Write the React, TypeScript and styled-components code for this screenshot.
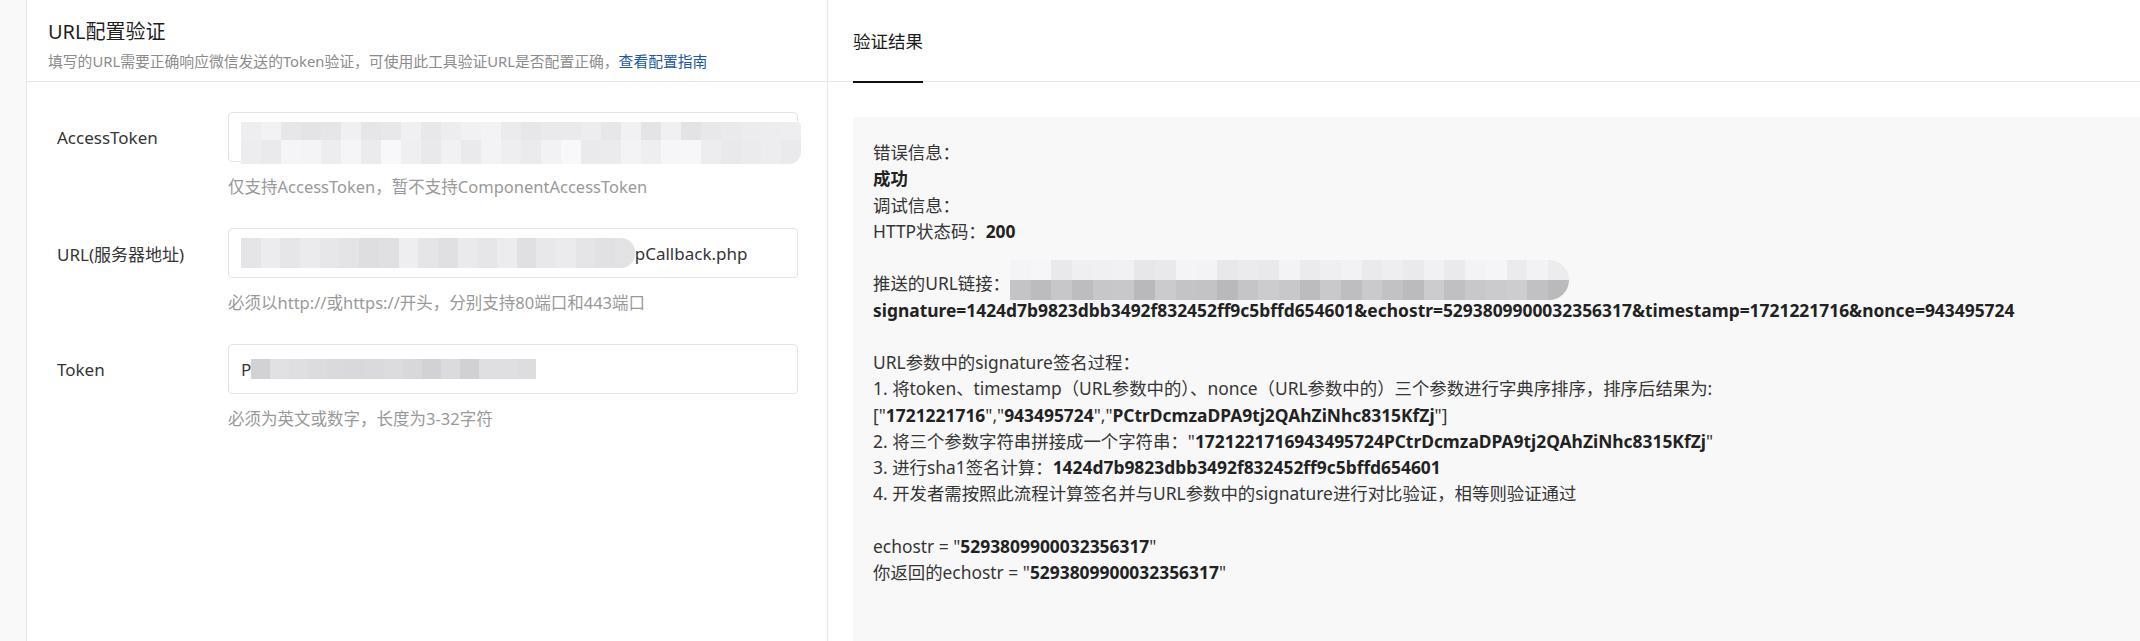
import React from 'react';
import styled, { createGlobalStyle } from 'styled-components';

const GlobalStyle = createGlobalStyle`
  html, body {
    margin: 0;
    padding: 0;
    background: #fff;
  }
  body {
    font-family: "Noto Sans", "Noto Sans CJK SC", sans-serif;
    color: #353535;
  }
`;

// blurred (pixelated) bits of the screenshot, a grid of grey cells
type MosaicRow = { h: number; lo: number; hi: number };

function shades(count: number, seed: number, lo: number, hi: number) {
  const out: string[] = [];
  let s = seed;
  for (let i = 0; i < count; i++) {
    s = (s * 9301 + 49297) % 233280;
    const v = Math.round(lo + (s / 233280) * (hi - lo));
    out.push(`rgb(${v},${v},${Math.min(255, v + 2)})`);
  }
  return out;
}

const MosaicGrid = styled.span<{ $cols: number; $cell: number; $radius: string; $shift: number }>`
  display: inline-grid;
  flex-shrink: 0;
  grid-template-columns: repeat(${(p) => p.$cols}, ${(p) => p.$cell}px);
  border-radius: ${(p) => p.$radius};
  overflow: hidden;
  margin-top: ${(p) => p.$shift}px;
  vertical-align: middle;
`;

const Cell = styled.span`
  display: block;
`;

function Mosaic({
  cols,
  cell = 20,
  rows,
  seed,
  radius = '0',
  shift = 0,
}: {
  cols: number;
  cell?: number;
  rows: MosaicRow[];
  seed: number;
  radius?: string;
  shift?: number;
}) {
  return (
    <MosaicGrid $cols={cols} $cell={cell} $radius={radius} $shift={shift}>
      {rows.map((row, r) =>
        shades(cols, seed + r * 17, row.lo, row.hi).map((c, i) => (
          <Cell key={`${r}-${i}`} style={{ background: c, height: row.h }} />
        ))
      )}
    </MosaicGrid>
  );
}

const Page = styled.div`
  display: flex;
  height: 100vh;
  min-height: 641px;
`;

const Strip = styled.div`
  width: 26px;
  flex-shrink: 0;
  background: #f9f9f9;
  border-right: 1px solid #e6e6e6;
`;

const LeftPanel = styled.div`
  width: 800px;
  flex-shrink: 0;
  border-right: 1px solid #e7e7e7;
  display: flex;
  flex-direction: column;
`;

const LeftHeader = styled.div`
  box-sizing: border-box;
  height: 82px;
  border-bottom: 1px solid #e7e7e7;
  padding: 18px 0 0 21px;
`;

const Title = styled.h1`
  margin: 0;
  font-size: 20px;
  line-height: 28px;
  font-weight: 400;
  color: #1f1f1f;
`;

const Subtitle = styled.p`
  margin: 4px 0 0;
  font-size: 14.8px;
  line-height: 22px;
  color: #8c8c8c;
`;

const GuideLink = styled.a`
  color: #1b58a8;
  text-decoration: none;
  cursor: pointer;
`;

const Form = styled.div`
  display: flex;
  flex-direction: column;
  gap: 30px;
  padding: 30px 0 0 30px;
`;

const Field = styled.div`
  display: grid;
  grid-template-columns: 171px 570px;
`;

const Label = styled.div`
  height: 50px;
  display: flex;
  align-items: center;
  font-size: 17px;
  color: #353535;
  white-space: nowrap;
`;

const Control = styled.div`
  display: flex;
  flex-direction: column;
`;

const InputBox = styled.div`
  height: 50px;
  box-sizing: border-box;
  border: 1px solid #e3e3e3;
  border-radius: 4px;
  padding: 0 12px;
  display: flex;
  align-items: center;
  font-size: 17px;
  color: #353535;
  white-space: nowrap;
  overflow: visible;
`;

const Hint = styled.div`
  margin-top: 14px;
  font-size: 16.5px;
  line-height: 22px;
  color: #999;
`;

const RightPanel = styled.div`
  flex: 1;
  display: flex;
  flex-direction: column;
  min-width: 0;
`;

const ResultHeader = styled.div`
  height: 82px;
  box-sizing: border-box;
  border-bottom: 1px solid #e7e7e7;
  padding-left: 25px;
  display: flex;
`;

const Tab = styled.div`
  position: relative;
  display: flex;
  align-items: center;
  font-size: 17.5px;
  color: #1a1a1a;

  &::after {
    content: '';
    position: absolute;
    left: 0;
    right: 0;
    bottom: -2px;
    height: 2px;
    background: #111;
  }
`;

const ResultBox = styled.div`
  flex: 1;
  margin: 35px 0 0 25px;
  background: #f8f8f8;
  border-radius: 4px 0 0 0;
  padding: 22px 20px;
  font-size: 17.4px;
  line-height: 26.25px;
  color: #353535;
  white-space: nowrap;
`;

const Line = styled.div`
  min-height: 26.25px;
`;

const B = styled.b`
  font-weight: 700;
  color: #222;
`;

const LinkCover = styled.span`
  position: relative;
  display: inline-block;
  width: 0;
  height: 1em;

  & > span {
    position: absolute;
    left: 0;
    top: -13px;
  }
`;

export default function App() {
  return (
    <>
      <GlobalStyle />
      <Page>
        <Strip />
        <LeftPanel>
          <LeftHeader>
            <Title>URL配置验证</Title>
            <Subtitle>
              填写的URL需要正确响应微信发送的Token验证，可使用此工具验证URL是否配置正确，
              <GuideLink>查看配置指南</GuideLink>
            </Subtitle>
          </LeftHeader>
          <Form>
            <Field>
              <Label>AccessToken</Label>
              <Control>
                <InputBox>
                  <Mosaic
                    cols={28}
                    seed={11}
                    shift={12}
                    radius="0 4px 12px 0"
                    rows={[
                      { h: 18, lo: 226, hi: 244 },
                      { h: 24, lo: 232, hi: 248 },
                    ]}
                  />
                </InputBox>
                <Hint>仅支持AccessToken，暂不支持ComponentAccessToken</Hint>
              </Control>
            </Field>
            <Field>
              <Label>URL(服务器地址)</Label>
              <Control>
                <InputBox>
                  <Mosaic
                    cols={20}
                    cell={19.7}
                    seed={5}
                    radius="0 14px 14px 0"
                    rows={[{ h: 30, lo: 222, hi: 238 }]}
                  />
                  <span>pCallback.php</span>
                </InputBox>
                <Hint>必须以http://或https://开头，分别支持80端口和443端口</Hint>
              </Control>
            </Field>
            <Field>
              <Label>Token</Label>
              <Control>
                <InputBox>
                  <span>P</span>
                  <Mosaic
                    cols={15}
                    cell={19}
                    seed={23}
                    rows={[{ h: 20, lo: 208, hi: 226 }]}
                  />
                </InputBox>
                <Hint>必须为英文或数字，长度为3-32字符</Hint>
              </Control>
            </Field>
          </Form>
        </LeftPanel>
        <RightPanel>
          <ResultHeader>
            <Tab>验证结果</Tab>
          </ResultHeader>
          <ResultBox>
            <Line>错误信息：</Line>
            <Line>
              <B>成功</B>
            </Line>
            <Line>调试信息：</Line>
            <Line>
              HTTP状态码：<B>200</B>
            </Line>
            <Line />
            <Line>
              推送的URL链接：
              <LinkCover>
                <Mosaic
                  cols={27}
                  cell={20.7}
                  seed={41}
                  radius="0 20px 20px 0"
                  rows={[
                    { h: 20, lo: 230, hi: 246 },
                    { h: 20, lo: 184, hi: 206 },
                  ]}
                />
              </LinkCover>
            </Line>
            <Line>
              <B>
                signature=1424d7b9823dbb3492f832452ff9c5bffd654601&amp;echostr=5293809900032356317&amp;timestamp=1721221716&amp;nonce=943495724
              </B>
            </Line>
            <Line />
            <Line>URL参数中的signature签名过程：</Line>
            <Line>1. 将token、timestamp（URL参数中的）、nonce（URL参数中的）三个参数进行字典序排序，排序后结果为:</Line>
            <Line>
              ["<B>1721221716</B>","<B>943495724</B>","<B>PCtrDcmzaDPA9tj2QAhZiNhc8315KfZj</B>"]
            </Line>
            <Line>
              2. 将三个参数字符串拼接成一个字符串："<B>1721221716943495724PCtrDcmzaDPA9tj2QAhZiNhc8315KfZj</B>"
            </Line>
            <Line>
              3. 进行sha1签名计算：<B>1424d7b9823dbb3492f832452ff9c5bffd654601</B>
            </Line>
            <Line>4. 开发者需按照此流程计算签名并与URL参数中的signature进行对比验证，相等则验证通过</Line>
            <Line />
            <Line>
              echostr = "<B>5293809900032356317</B>"
            </Line>
            <Line>
              你返回的echostr = "<B>5293809900032356317</B>"
            </Line>
          </ResultBox>
        </RightPanel>
      </Page>
    </>
  );
}
